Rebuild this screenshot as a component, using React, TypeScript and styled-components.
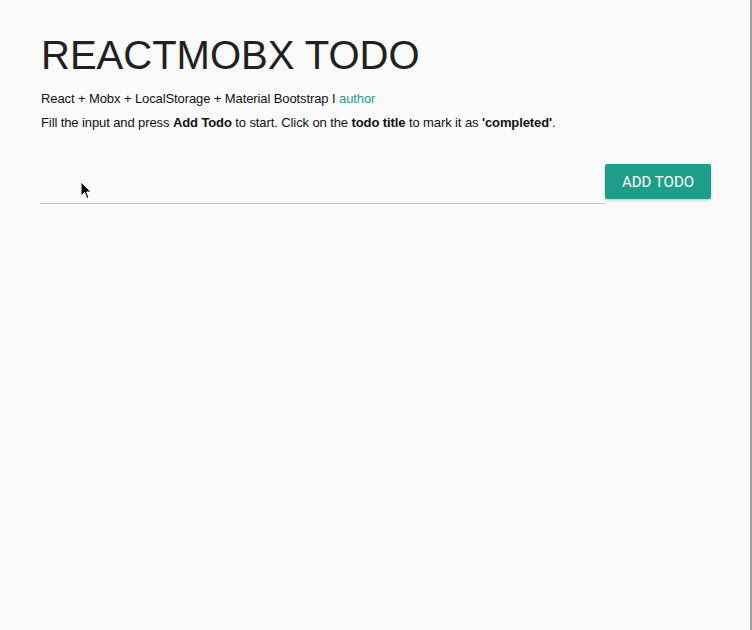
import React from "react";
import styled, { createGlobalStyle } from "styled-components";

const Global = createGlobalStyle`
  html, body { margin: 0; padding: 0; background: #fafafa; }
  body { font-family: "Liberation Sans", Arial, sans-serif; color: #212121; }
`;

const Page = styled.div`
  position: relative;
  box-sizing: border-box;
  width: 752px;
  height: 630px;
  padding: 33px 41px 0 41px;
  border-right: 2px solid #9e9e9e;
`;

const Title = styled.h1`
  margin: 0;
  font-size: 40px;
  font-weight: 400;
  line-height: 44px;
  color: #212121;
`;

const Line = styled.p`
  margin: 0;
  font-size: 13px;
  line-height: 24px;
  letter-spacing: -0.1px;
  color: #111;
`;

const Intro = styled(Line)`
  margin-top: 10px;
`;

const Link = styled.a`
  color: #1f9d8b;
  text-decoration: none;
`;

const Form = styled.div`
  display: flex;
  align-items: flex-start;
  margin-top: 29px;
  width: 670px;
`;

const Field = styled.div`
  flex: 1;
  height: 39px;
  border-bottom: 1px solid #c4c4c4;
  margin-left: -1px;
`;

const Button = styled.button`
  width: 106px;
  height: 35px;
  border: none;
  border-radius: 2px;
  background: #1f9d8b;
  color: #fff;
  font-family: Roboto, "Liberation Sans", sans-serif;
  font-size: 15px;
  font-weight: 400;
  text-transform: uppercase;
  box-shadow: 0 1px 3px rgba(0, 0, 0, 0.25);
  padding: 0;
`;

const Cursor = styled.svg`
  position: absolute;
  left: 80px;
  top: 181px;
`;

export default function App() {
  return (
    <>
      <Global />
      <Page>
        <Title>REACTMOBX TODO</Title>
        <Intro>
          React + Mobx + LocalStorage + Material Bootstrap I <Link href="#">author</Link>
        </Intro>
        <Line>
          Fill the input and press <b>Add Todo</b> to start. Click on the <b>todo title</b> to mark it as{" "}
          <b>'completed'</b>.
        </Line>
        <Form>
          <Field />
          <Button>Add Todo</Button>
        </Form>
        <Cursor width="12" height="19" viewBox="0 0 12 19">
          <path d="M1 1 L1 15 L4.5 11.5 L7 17.5 L9 16.6 L6.6 11 L11 11 Z" fill="#000" stroke="#fff" strokeWidth="1" />
        </Cursor>
      </Page>
    </>
  );
}
